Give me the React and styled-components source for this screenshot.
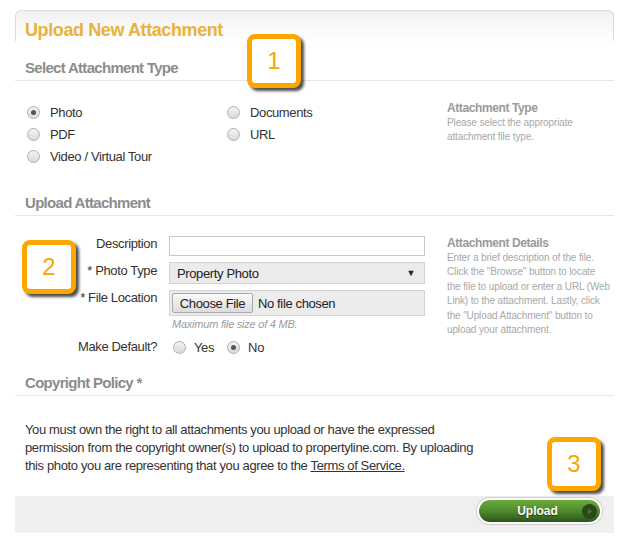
import React from 'react';
import styled, { createGlobalStyle } from 'styled-components';

const GlobalStyle = createGlobalStyle`
  body {
    margin: 0;
    background: #fff;
    font-family: "Liberation Sans", Arial, sans-serif;
    color: #333;
  }
`;

const typeOptions = [
  { label: 'Photo', checked: true },
  { label: 'Documents' },
  { label: 'PDF' },
  { label: 'URL' },
  { label: 'Video / Virtual Tour' },
];

const App = () => {
  return (
    <Page>
      <GlobalStyle />
      <Panel>
        <PanelHead>
          <Title>Upload New Attachment</Title>
        </PanelHead>

        <SectionHeader>Select Attachment Type</SectionHeader>
        <SectionBody pad="20px">
          <RadioGrid>
            {typeOptions.map((opt, i) => (
              <RadioLabel key={i}>
                <Radio type="radio" name="type" defaultChecked={opt.checked} />
                {opt.label}
              </RadioLabel>
            ))}
          </RadioGrid>
          <Help>
            <HelpTitle>Attachment Type</HelpTitle>
            <HelpText>
              Please select the appropriate<br />
              attachment file type.
            </HelpText>
          </Help>
        </SectionBody>

        <SectionHeader gap="27px">Upload Attachment</SectionHeader>
        <SectionBody pad="20px">
          <Form>
            <FieldRow>
              <FieldLabel>Description</FieldLabel>
              <TextInput type="text" />
            </FieldRow>
            <FieldRow>
              <FieldLabel pad="1px">* Photo Type</FieldLabel>
              <FakeSelect>
                <span>Property Photo</span>
                <Caret>▼</Caret>
              </FakeSelect>
            </FieldRow>
            <FieldRow>
              <FieldLabel>* File Location</FieldLabel>
              <div>
                <FileBox>
                  <ChooseButton type="button">Choose File</ChooseButton>
                  <span>No file chosen</span>
                </FileBox>
                <Hint>Maximum file size of 4 MB.</Hint>
              </div>
            </FieldRow>
            <FieldRow center>
              <FieldLabel>Make Default?</FieldLabel>
              <InlineRadios>
                <RadioLabel small>
                  <Radio type="radio" name="default" />
                  Yes
                </RadioLabel>
                <RadioLabel small>
                  <Radio type="radio" name="default" defaultChecked />
                  No
                </RadioLabel>
              </InlineRadios>
            </FieldRow>
          </Form>
          <Help>
            <HelpTitle>Attachment Details</HelpTitle>
            <HelpText>
              Enter a brief description of the file.<br />
              Click the "Browse" button to locate<br />
              the file to upload or enter a URL (Web<br />
              Link) to the attachment. Lastly, click<br />
              the "Upload Attachment" button to<br />
              upload your attachment.
            </HelpText>
          </Help>
        </SectionBody>

        <SectionHeader gap="18px">Copyright Policy *</SectionHeader>
        <Policy>
          You must own the right to all attachments you upload or have the expressed<br />
          permission from the copyright owner(s) to upload to propertyline.com. By uploading<br />
          this photo you are representing that you agree to the <TermsLink>Terms of Service.</TermsLink>
        </Policy>

        <Footer>
          <UploadButton type="button">
            <span>Upload</span>
            <svg width="15" height="15" viewBox="0 0 15 15">
              <circle cx="7.5" cy="7.5" r="7.5" fill="#2a461b" />
              <path d="M6 4.2 L10.2 7.5 L6 10.8 Z" fill="#46702f" />
            </svg>
          </UploadButton>
        </Footer>
      </Panel>

      <Badge left={247} top={34}>1</Badge>
      <Badge left={22} top={240}>2</Badge>
      <Badge left={547} top={437}>3</Badge>
    </Page>
  );
};

//style

const Page = styled.div`
  position: relative;
  width: 629px;
  height: 538px;
  padding: 10px 15px 0;
  box-sizing: border-box;
`;

const Panel = styled.div`
  width: 599px;
`;

const PanelHead = styled.div`
  border: 1px solid #dcdcdc;
  border-bottom: 0;
  border-radius: 6px 6px 0 0;
  background: linear-gradient(#f1f1f1, #fff 30px);
  padding: 8px 9px 0;
  height: 22px;
`;

const Title = styled.h1`
  margin: 0;
  font-size: 18px;
  line-height: 22px;
  font-weight: bold;
  letter-spacing: -0.4px;
  color: #e9b23c;
`;

const SectionHeader = styled.h2`
  margin: ${(p) => p.gap || '18px'} 0 0;
  padding: 0 10px 3px;
  font-size: 15px;
  line-height: 18px;
  font-weight: bold;
  letter-spacing: -0.7px;
  color: #8c8c8c;
  border-bottom: 1px solid #e6e6e6;
`;

const SectionBody = styled.div`
  display: grid;
  grid-template-columns: 432px 1fr;
  padding-top: ${(p) => p.pad};
`;

const RadioGrid = styled.div`
  display: grid;
  grid-template-columns: 200px auto;
  grid-auto-rows: 22px;
  padding-left: 12px;
`;

const RadioLabel = styled.label`
  display: flex;
  align-items: center;
  gap: ${(p) => (p.small ? '8px' : '10px')};
  font-size: 13px;
  letter-spacing: -0.37px;
  color: #333;
`;

const Radio = styled.input`
  appearance: none;
  margin: 0;
  width: 13px;
  height: 13px;
  border-radius: 50%;
  border: 1px solid #b0b0b0;
  background: linear-gradient(#f3f3f3, #dadada);
  box-sizing: border-box;
  position: relative;
  flex: none;
  &:checked::after {
    content: '';
    position: absolute;
    left: 3px;
    top: 3px;
    width: 5px;
    height: 5px;
    border-radius: 50%;
    background: #555;
  }
`;

const Help = styled.div`
  padding-top: 0;
`;

const HelpTitle = styled.div`
  font-size: 12px;
  line-height: 14px;
  font-weight: bold;
  letter-spacing: -0.4px;
  color: #9a9a9a;
`;

const HelpText = styled.div`
  margin-top: 1px;
  font-size: 10px;
  line-height: 14.4px;
  letter-spacing: -0.13px;
  color: #a8a8a8;
  white-space: nowrap;
`;

const Form = styled.div`
  display: flex;
  flex-direction: column;
  gap: 6px;
`;

const FieldRow = styled.div`
  display: grid;
  grid-template-columns: 142px 256px;
  column-gap: 12px;
  align-items: ${(p) => (p.center ? 'center' : 'start')};
  margin-top: ${(p) => (p.center ? '1px' : '0')};
`;

const FieldLabel = styled.div`
  text-align: right;
  font-size: 13px;
  line-height: 16px;
  letter-spacing: -0.37px;
  padding-top: ${(p) => p.pad || '0'};
  color: #333;
`;

const TextInput = styled.input`
  width: 256px;
  height: 20px;
  box-sizing: border-box;
  border: 1px solid #c8c8c8;
  margin: 0;
  padding: 0 4px;
`;

const FakeSelect = styled.div`
  height: 22px;
  box-sizing: border-box;
  border: 1px solid #d2d2d2;
  background: #ebebeb;
  display: flex;
  align-items: center;
  justify-content: space-between;
  padding: 0 9px 0 7px;
  font-size: 13px;
  letter-spacing: -0.37px;
  color: #222;
`;

const Caret = styled.span`
  font-size: 9px;
  color: #222;
`;

const FileBox = styled.div`
  height: 26px;
  box-sizing: border-box;
  border: 1px solid #d2d2d2;
  background: #ececec;
  display: flex;
  align-items: center;
  gap: 5px;
  padding: 0 2px;
  font-size: 13px;
  letter-spacing: -0.37px;
  color: #222;
`;

const ChooseButton = styled.button`
  height: 20px;
  width: 81px;
  padding: 0;
  border: 1px solid #a9a9a9;
  border-radius: 2px;
  background: linear-gradient(#fafafa, #dcdcdc);
  font-family: inherit;
  font-size: 13px;
  letter-spacing: -0.37px;
  color: #222;
`;

const Hint = styled.div`
  margin-top: 2px;
  padding-left: 3px;
  font-size: 11px;
  line-height: 13px;
  font-style: italic;
  letter-spacing: -0.23px;
  color: #9c9c9c;
`;

const InlineRadios = styled.div`
  display: flex;
  align-items: center;
  gap: 13px;
  padding-left: 4px;
  height: 18px;
`;

const Policy = styled.p`
  margin: 25px 0 0;
  padding: 0 10px;
  font-size: 13px;
  line-height: 18px;
  letter-spacing: -0.37px;
  color: #333;
  white-space: nowrap;
`;

const TermsLink = styled.span`
  text-decoration: underline;
`;

const Footer = styled.div`
  margin-top: 21px;
  height: 37px;
  background: #efefef;
  display: flex;
  justify-content: flex-end;
  align-items: flex-start;
  padding: 2px 12px 0 0;
  box-sizing: border-box;
`;

const UploadButton = styled.button`
  width: 125px;
  height: 26px;
  box-sizing: border-box;
  border: 2px solid #fff;
  box-shadow: 0 0 0 1px #cdcdcd;
  border-radius: 13px;
  background: linear-gradient(#6cab3c, #4f8a2b 50%, #2c5318);
  display: flex;
  align-items: center;
  padding: 0 3px 0 0;
  font-family: inherit;
  span {
    flex: 1;
    text-align: center;
    padding-left: 14px;
    font-size: 12px;
    font-weight: bold;
    color: #fff;
    text-shadow: 0 1px 1px #1c3510;
  }
  svg {
    flex: none;
  }
`;

const Badge = styled.div`
  position: absolute;
  left: ${(p) => p.left}px;
  top: ${(p) => p.top}px;
  width: 54px;
  height: 54px;
  box-sizing: border-box;
  border: 5px solid #fba700;
  border-radius: 8px;
  background: #fff;
  box-shadow: 3px 3px 3px rgba(0, 0, 0, 0.7);
  display: flex;
  align-items: center;
  justify-content: center;
  font-size: 24px;
  color: #f7a600;
`;

export default App;
